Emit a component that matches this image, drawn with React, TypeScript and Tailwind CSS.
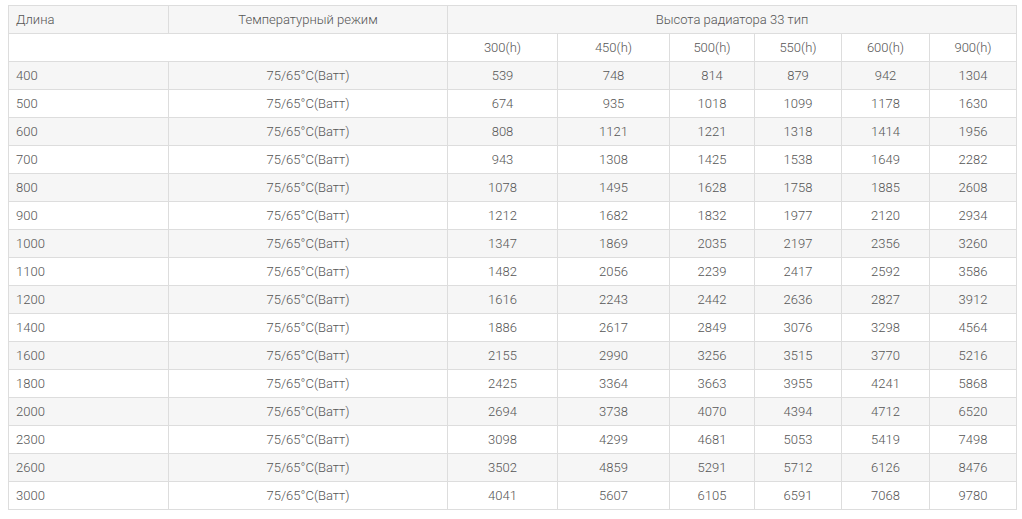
const heights = ["300", "450", "500", "550", "600", "900"]

const rows: [string, number[]][] = [
  ["400", [539, 748, 814, 879, 942, 1304]],
  ["500", [674, 935, 1018, 1099, 1178, 1630]],
  ["600", [808, 1121, 1221, 1318, 1414, 1956]],
  ["700", [943, 1308, 1425, 1538, 1649, 2282]],
  ["800", [1078, 1495, 1628, 1758, 1885, 2608]],
  ["900", [1212, 1682, 1832, 1977, 2120, 2934]],
  ["1000", [1347, 1869, 2035, 2197, 2356, 3260]],
  ["1100", [1482, 2056, 2239, 2417, 2592, 3586]],
  ["1200", [1616, 2243, 2442, 2636, 2827, 3912]],
  ["1400", [1886, 2617, 2849, 3076, 3298, 4564]],
  ["1600", [2155, 2990, 3256, 3515, 3770, 5216]],
  ["1800", [2425, 3364, 3663, 3955, 4241, 5868]],
  ["2000", [2694, 3738, 4070, 4394, 4712, 6520]],
  ["2300", [3098, 4299, 4681, 5053, 5419, 7498]],
  ["2600", [3502, 4859, 5291, 5712, 6126, 8476]],
  ["3000", [4041, 5607, 6105, 6591, 7068, 9780]],
]

const cell = "h-[28px] border border-[#dddddd] px-2 py-0 font-light"

export default function App() {
  return (
    <div className="bg-white w-[1022px] h-[519px] overflow-hidden pt-[5px] pl-[8px] font-['Roboto',sans-serif] text-[13px] leading-[18px] text-[#555555]">
      <table className="w-[1008px] table-fixed border-collapse">
        <colgroup>
          <col className="w-[160px]" />
          <col className="w-[279px]" />
          <col className="w-[110px]" />
          <col className="w-[112px]" />
          <col className="w-[85px]" />
          <col className="w-[87px]" />
          <col className="w-[88px]" />
          <col className="w-[87px]" />
        </colgroup>
        <thead>
          <tr className="bg-[#f6f6f6]">
            <th className={cn(cell, "text-left pl-[7px]")}>Длина</th>
            <th className={cn(cell, "text-center")}>Температурный режим</th>
            <th colSpan={6} className={cn(cell, "text-center")}>Высота радиатора 33 тип</th>
          </tr>
          <tr className="bg-white">
            <th colSpan={2} className={cell}></th>
            {heights.map((h) => (
              <th key={h} className={cn(cell, "text-center")}>{h}(h)</th>
            ))}
          </tr>
        </thead>
        <tbody>
          {rows.map(([len, vals], i) => (
            <tr key={len} className={i % 2 === 0 ? "bg-[#f6f6f6]" : "bg-white"}>
              <td className={cn(cell, "text-left pl-[7px]")}>{len}</td>
              <td className={cn(cell, "text-center")}>75/65°C(Ватт)</td>
              {vals.map((v, j) => (
                <td key={j} className={cn(cell, "text-center")}>{v}</td>
              ))}
            </tr>
          ))}
        </tbody>
      </table>
    </div>
  )
}

function cn(...c: string[]) {
  return c.join(" ")
}
